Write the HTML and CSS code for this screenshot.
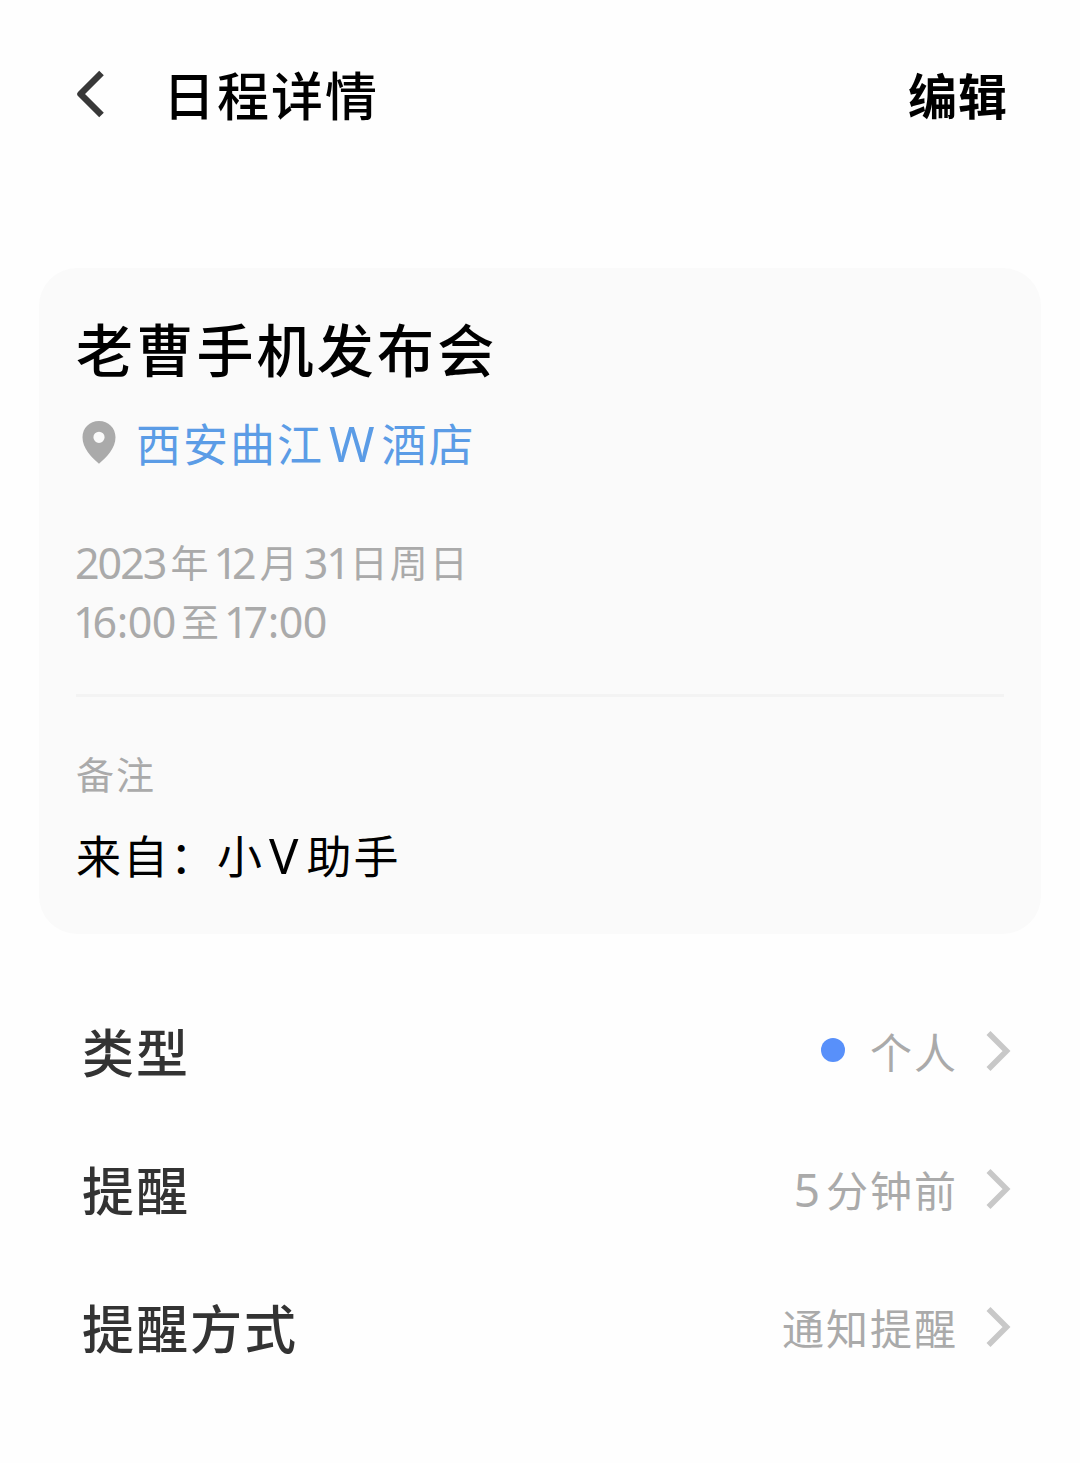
FILE: index.html
```html
<!DOCTYPE html>
<html lang="zh-CN">
<head>
  <meta charset="UTF-8">
  <meta name="viewport" content="width=device-width, initial-scale=1.0">
  <title>日程详情</title>
  <link rel="stylesheet" href="styles.css">
</head>
<body>
  <header class="header">
    <svg class="back" width="30" height="50" viewBox="0 0 30 50" fill="none" stroke="#383838" stroke-width="6.5">
      <path d="M26.5 4L5.5 25L26.5 46" stroke-linejoin="round"/>
    </svg>
    <h1 class="header-title">日程详情</h1>
    <span class="edit">编辑</span>
  </header>

  <main>
    <section class="card">
      <h2 class="event-title">老曹手机发布会</h2>
      <div class="location">
        <svg class="pin" width="34" height="44" viewBox="0 0 34 44">
          <path fill="#aaa" fill-rule="evenodd" d="M17 0C7.5 0 0.5 7.1 0.5 16.3C0.5 27 9 36 17 42.7C25 36 33.5 27 33.5 16.3C33.5 7.1 26.5 0 17 0ZM17 10.7A5.6 5.6 0 1 1 17 21.9A5.6 5.6 0 1 1 17 10.7Z"/>
        </svg>
        <span class="place">西安曲江<span class="latin">W</span>酒店</span>
      </div>
      <div class="time">
        <div><span class="num first">2023</span>年<span class="num from-one"><span class="one">1</span>2</span>月<span class="num">3<span class="one">1</span></span>日周日</div>
        <div class="hours"><span class="num first from-one"><span class="one">1</span>6:00</span>至<span class="num from-one"><span class="one">1</span>7:00</span></div>
      </div>
      <hr class="divider">
      <div class="note-label">备注</div>
      <div class="note">来自：小<span class="latin">V</span>助手</div>
    </section>

    <section class="list">
      <div class="row">
        <span class="row-label">类型</span>
        <span class="dot"></span>
        <span class="row-value">个人</span>
        <svg class="arrow" width="26" height="42" viewBox="0 0 26 42" fill="none" stroke="#c8c8c8" stroke-width="5.6">
          <path d="M2.5 3L20.5 21L2.5 39"/>
        </svg>
      </div>
      <div class="row">
        <span class="row-label">提醒</span>
        <span class="row-value"><span class="five">5</span>分钟前</span>
        <svg class="arrow" width="26" height="42" viewBox="0 0 26 42" fill="none" stroke="#c8c8c8" stroke-width="5.6">
          <path d="M2.5 3L20.5 21L2.5 39"/>
        </svg>
      </div>
      <div class="row">
        <span class="row-label">提醒方式</span>
        <span class="row-value">通知提醒</span>
        <svg class="arrow" width="26" height="42" viewBox="0 0 26 42" fill="none" stroke="#c8c8c8" stroke-width="5.6">
          <path d="M2.5 3L20.5 21L2.5 39"/>
        </svg>
      </div>
    </section>
  </main>
</body>
</html>
```
FILE: styles.css
```css
* { box-sizing: border-box; }
body { margin: 0; background: #fefefe; color: #000; font-family: "Noto Sans CJK SC", sans-serif; }
h1, h2 { margin: 0; font-weight: 500; }

.header { display: flex; align-items: center; height: 188px; padding: 0 72px 0 75px; }
.back { display: block; }
.header-title { flex: 1; margin-left: 58px; font-size: 52px; line-height: 80px; letter-spacing: 2px; }
.edit { font-size: 49px; line-height: 80px; letter-spacing: 1px; font-weight: 700; }

.card { margin: 80px 39px 0; padding: 43px 37px 50px; height: 666px; background: #fafafa; border-radius: 38px; }
.event-title { font-size: 57px; line-height: 72px; letter-spacing: 3.2px; }
.location { display: flex; align-items: center; height: 60px; margin-top: 30px; padding-left: 6px; }
.place { margin-left: 20px; font-size: 45px; line-height: 60px; letter-spacing: 2px; color: #5b9ce6; }
.latin { margin: 0 7px 0 5px; font-family: "Noto Sans", sans-serif; font-size: 49px; line-height: 1; letter-spacing: 0; }

.time { margin-top: 58px; font-size: 38px; line-height: 60px; letter-spacing: 2px; color: #aaa; }
.time > div { height: 59px; }
.num { margin: 0 5px 0 4px; font-family: "Noto Sans", sans-serif; font-size: 43px; line-height: 1; letter-spacing: -2px; vertical-align: -2px; }
.from-one { margin-left: 3px; }
.first { margin-left: -1px; }
.first.from-one { margin-left: -3px; }
.one { letter-spacing: -6px; }
.hours .num { letter-spacing: -0.5px; }
.hours .one { letter-spacing: -5px; }

.divider { height: 3px; margin: 45px 0 0; border: 0; background: #f3f3f3; }
.note-label { margin-top: 51px; font-size: 38px; line-height: 50px; letter-spacing: 2px; color: #aaa; }
.note { height: 60px; margin-top: 27px; font-size: 45px; line-height: 60px; letter-spacing: 2px; }
.note .latin { margin-right: 8px; }

.list { margin-top: 48px; padding: 0 68px 0 82px; }
.row { display: flex; align-items: center; height: 138px; }
.row-label { flex: 1; font-size: 52px; line-height: 80px; letter-spacing: 2px; font-weight: 500; color: #333; }
.dot { width: 24px; height: 24px; margin: 0 25px 2px 0; border-radius: 50%; background: #5890fa; }
.row-value { height: 60px; font-size: 42px; line-height: 60px; letter-spacing: 2px; color: #aaa; }
.five { margin-right: 4px; font-family: "Noto Sans", sans-serif; font-size: 46px; line-height: 1; }
.arrow { display: block; margin-left: 28px; }
```
